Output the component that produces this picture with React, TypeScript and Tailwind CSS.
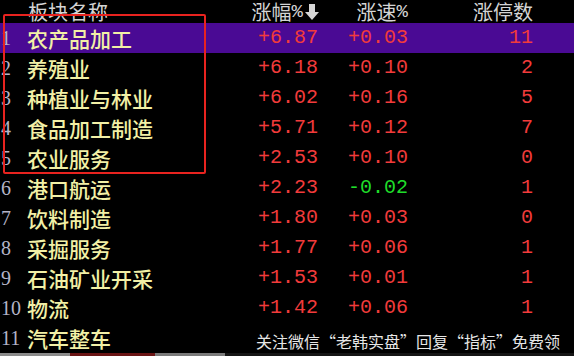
const rows = [
  { name: '农产品加工', chg: '+6.87', spd: '+0.03', lim: '11' },
  { name: '养殖业', chg: '+6.18', spd: '+0.10', lim: '2' },
  { name: '种植业与林业', chg: '+6.02', spd: '+0.16', lim: '5' },
  { name: '食品加工制造', chg: '+5.71', spd: '+0.12', lim: '7' },
  { name: '农业服务', chg: '+2.53', spd: '+0.10', lim: '0' },
  { name: '港口航运', chg: '+2.23', spd: '-0.02', lim: '1' },
  { name: '饮料制造', chg: '+1.80', spd: '+0.03', lim: '0' },
  { name: '采掘服务', chg: '+1.77', spd: '+0.06', lim: '1' },
  { name: '石油矿业开采', chg: '+1.53', spd: '+0.01', lim: '1' },
  { name: '物流', chg: '+1.42', spd: '+0.06', lim: '1' },
  { name: '汽车整车', chg: '', spd: '', lim: '' },
];

const cjk = "font-['Noto_Sans_CJK_SC',sans-serif]";
const mono = "font-['Liberation_Mono',monospace]";
const cols = 'grid grid-cols-[26px_200px_92px_90px_125px_1fr]';

const DownArrow = () => (
  <svg width="16" height="18" viewBox="0 0 16 18" className="ml-[1px]">
    <path d="M5 1h6v8h4l-7 8-7-8h4z" fill="#d6d6d6" />
  </svg>
);

const App = () => {
  return (
    <div className="relative w-[574px] h-[356px] overflow-hidden bg-black">
      <div className={`${cols} h-[23px] items-center text-[20px] leading-[22px] text-[#d4d4d4] ${cjk}`}>
        <span />
        <span className="pl-[2px]">板块名称</span>
        <span className="flex items-center justify-end -mr-[2px]">
          涨幅<span className={`${mono} text-[19px]`}>%</span>
          <DownArrow />
        </span>
        <span className="flex justify-end">
          涨速<span className={`${mono} text-[19px]`}>%</span>
        </span>
        <span className="text-right">涨停数</span>
        <span />
      </div>

      {rows.map((r, i) => (
        <div
          key={i}
          className={`${cols} h-[30px] items-center ${i === 0 ? 'bg-[#4a0a94]' : ''}`}
        >
          <span className="pl-[1px] font-['Liberation_Serif',serif] text-[20px] leading-none text-[#b4b4c8]">
            {i + 1}
          </span>
          <span className={`pl-[1px] text-[21px] font-medium leading-none text-[#f2f0a6] ${cjk}`}>{r.name}</span>
          <span className={`text-right text-[20px] leading-none text-[#f23b3b] ${mono}`}>{r.chg}</span>
          <span
            className={`text-right text-[20px] leading-none ${mono} ${
              r.spd.startsWith('-') ? 'text-[#1fdc2a]' : 'text-[#f23b3b]'
            }`}
          >
            {r.spd}
          </span>
          <span className={`text-right text-[20px] leading-none text-[#f23b3b] ${mono}`}>{r.lim}</span>
          <span />
        </div>
      ))}

      <div className="flex h-[3px]">
        <div className="w-[70px] bg-[#8a8a8a]" />
        <div className="w-[85px] bg-[#6a1414]" />
        <div className="w-[70px] bg-[#7a7a7a]" />
        <div className="flex-1 bg-[#151515]" />
      </div>

      {/* highlight box */}
      <div className="absolute left-[3px] top-[14px] w-[203px] h-[160px] rounded-[2px] border-2 border-[#e8231f]" />

      {/* watermark */}
      <div
        className={`absolute left-[256px] top-[330px] bg-black text-[16px] leading-[22px] text-[#e6e6e6] ${cjk}`}
      >
        关注微信“老韩实盘”回复“指标”免费领
      </div>
    </div>
  );
};

export default App;
